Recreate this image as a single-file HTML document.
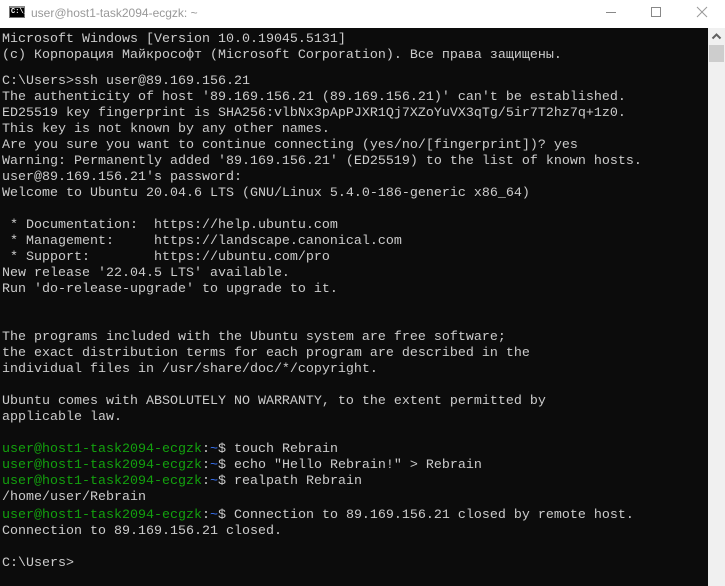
<!DOCTYPE html>
<html><head><meta charset="utf-8"><style>
*{margin:0;padding:0;box-sizing:border-box}
body{width:725px;height:586px;overflow:hidden;background:#0c0c0c;position:relative}
#title{position:absolute;left:0;top:0;width:725px;height:28px;background:#fff}
#icon{position:absolute;left:9px;top:6px;width:16px;height:12px;background:#000;border:1px solid #777;border-top:2px solid #888}
#icon span{position:absolute;left:1px;top:0px;font:bold 7px "Liberation Mono",monospace;color:#fff;line-height:8px}
#ttl{position:absolute;left:31px;top:6px;font:12px "Liberation Sans",sans-serif;color:#999}
#con{position:absolute;left:0;top:30px;width:708px;height:556px;background:#0c0c0c;font:13.33px "Liberation Mono","Noto Sans CJK SC",monospace;color:#cccccc;white-space:pre}
.l{position:absolute;left:2px;height:16px;line-height:16px}
.g{color:#13a10e}.b{color:#3b78ff}
#sb{position:absolute;left:708px;top:28px;width:17px;height:558px;background:#f0f0f0}
#thumb{position:absolute;left:1px;top:17px;width:15px;height:17px;background:#cdcdcd}
</style></head><body>
<div id="title">
<div id="icon"><span>C:\_</span></div>
<div id="ttl">user@host1-task2094-ecgzk: ~</div>
<svg style="position:absolute;left:600px;top:0" width="125" height="28">
<line x1="6" y1="12.5" x2="16" y2="12.5" stroke="#888" stroke-width="1"/>
<rect x="51.5" y="7.5" width="9" height="9" fill="none" stroke="#888" stroke-width="1"/>
<line x1="97" y1="7" x2="107" y2="17" stroke="#999" stroke-width="1"/>
<line x1="107" y1="7" x2="97" y2="17" stroke="#999" stroke-width="1"/>
</svg>
</div>
<div id="con">
<div class="l" style="top:2px">Microsoft Windows [Version 10.0.19045.5131]</div>
<div class="l" style="top:18px">(c) Корпорация Майкрософт (Microsoft Corporation). Все права защищены.</div>
<div class="l" style="top:44px">C:\Users&gt;ssh user@89.169.156.21</div>
<div class="l" style="top:60px">The authenticity of host '89.169.156.21 (89.169.156.21)' can't be established.</div>
<div class="l" style="top:76px">ED25519 key fingerprint is SHA256:vlbNx3pApPJXR1Qj7XZoYuVX3qTg/5ir7T2hz7q+1z0.</div>
<div class="l" style="top:92px">This key is not known by any other names.</div>
<div class="l" style="top:108px">Are you sure you want to continue connecting (yes/no/[fingerprint])? yes</div>
<div class="l" style="top:124px">Warning: Permanently added '89.169.156.21' (ED25519) to the list of known hosts.</div>
<div class="l" style="top:140px">user@89.169.156.21's password:</div>
<div class="l" style="top:156px">Welcome to Ubuntu 20.04.6 LTS (GNU/Linux 5.4.0-186-generic x86_64)</div>
<div class="l" style="top:188px"> * Documentation:  https://help.ubuntu.com</div>
<div class="l" style="top:204px"> * Management:     https://landscape.canonical.com</div>
<div class="l" style="top:220px"> * Support:        https://ubuntu.com/pro</div>
<div class="l" style="top:236px">New release '22.04.5 LTS' available.</div>
<div class="l" style="top:252px">Run 'do-release-upgrade' to upgrade to it.</div>
<div class="l" style="top:300px">The programs included with the Ubuntu system are free software;</div>
<div class="l" style="top:316px">the exact distribution terms for each program are described in the</div>
<div class="l" style="top:332px">individual files in /usr/share/doc/*/copyright.</div>
<div class="l" style="top:364px">Ubuntu comes with ABSOLUTELY NO WARRANTY, to the extent permitted by</div>
<div class="l" style="top:380px">applicable law.</div>
<div class="l" style="top:412px"><span class="g">user@host1-task2094-ecgzk</span>:<span class="b">~</span>$ touch Rebrain</div>
<div class="l" style="top:428px"><span class="g">user@host1-task2094-ecgzk</span>:<span class="b">~</span>$ echo "Hello Rebrain!" &gt; Rebrain</div>
<div class="l" style="top:444px"><span class="g">user@host1-task2094-ecgzk</span>:<span class="b">~</span>$ realpath Rebrain</div>
<div class="l" style="top:460px">/home/user/Rebrain</div>
<div class="l" style="top:478px"><span class="g">user@host1-task2094-ecgzk</span>:<span class="b">~</span>$ Connection to 89.169.156.21 closed by remote host.</div>
<div class="l" style="top:494px">Connection to 89.169.156.21 closed.</div>
<div class="l" style="top:526px">C:\Users&gt;</div>
</div>
<div id="sb">
<svg style="position:absolute;left:0;top:0" width="17" height="17"><path d="M4.5 10.5 L8.5 6.5 L12.5 10.5" fill="none" stroke="#606060" stroke-width="2"/></svg>
<div id="thumb"></div>
</div>
</body></html>
